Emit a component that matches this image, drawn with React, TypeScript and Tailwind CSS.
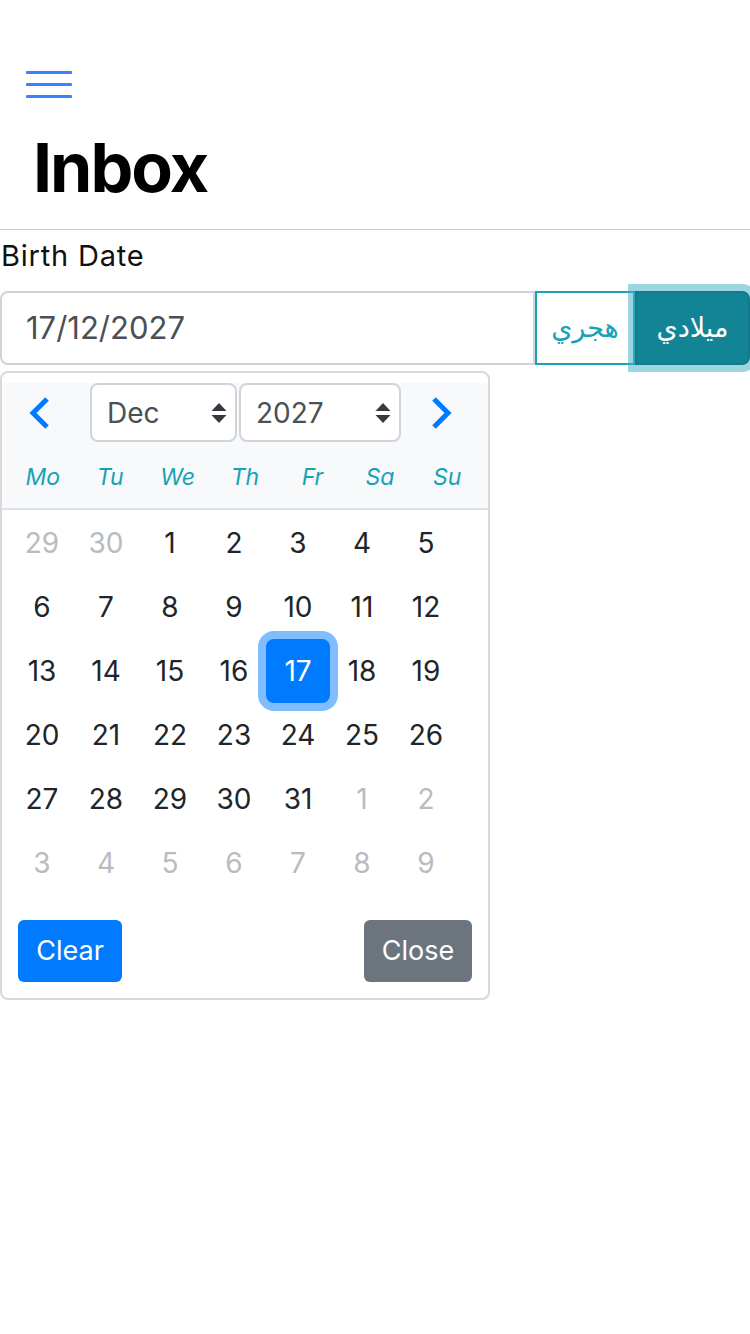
import { useState } from 'react';

const weekDays = ['Mo', 'Tu', 'We', 'Th', 'Fr', 'Sa', 'Su'];

type Day = { n: number; muted?: boolean };

const buildDays = (): Day[] => {
  const days: Day[] = [{ n: 29, muted: true }, { n: 30, muted: true }];
  for (let i = 1; i <= 31; i++) days.push({ n: i });
  for (let i = 1; i <= 9; i++) days.push({ n: i, muted: true });
  return days;
};

const Chevron = ({ dir }: { dir: 'left' | 'right' }) => (
  <svg width="24" height="34" viewBox="0 0 24 34" fill="none">
    <polyline
      points={dir === 'left' ? '19,3 5,17 19,31' : '5,3 19,17 5,31'}
      stroke="#007bff"
      strokeWidth="5"
      strokeLinejoin="miter"
    />
  </svg>
);

const SelectArrows = () => (
  <svg width="16" height="22" viewBox="0 0 16 22">
    <path d="M8 1 L15.5 9 L0.5 9 Z" fill="#343a40" />
    <path d="M0.5 13 L15.5 13 L8 21 Z" fill="#343a40" />
  </svg>
);

export default function App() {
  const [selected, setSelected] = useState(17);
  const days = buildDays();

  return (
    <div className="w-[750px] min-h-[1334px] bg-white font-['Inter',sans-serif]">
      {/* Toolbar */}
      <header className="h-[128px] pt-[40px] flex items-center px-[26px]">
        <svg width="46" height="27" viewBox="0 0 46 27">
          <line x1="1.5" y1="1.5" x2="44.5" y2="1.5" stroke="#3880ff" strokeWidth="3.2" strokeLinecap="round" />
          <line x1="1.5" y1="13.5" x2="44.5" y2="13.5" stroke="#3880ff" strokeWidth="3.2" strokeLinecap="round" />
          <line x1="1.5" y1="25.5" x2="44.5" y2="25.5" stroke="#3880ff" strokeWidth="3.2" strokeLinecap="round" />
        </svg>
      </header>

      {/* Large title */}
      <div className="h-[102px] pt-[5px] pl-[33px] border-b border-[#c8c7cc]">
        <h1 className="text-[68px] leading-none font-bold tracking-[-2px] text-black">Inbox</h1>
      </div>

      {/* Form */}
      <div className="pt-[11px]">
        <label className="block text-[29px] leading-none tracking-[0.8px] text-[#111] pl-[1px]">Birth Date</label>

        <div className="mt-[21px] flex h-[74px]">
          <div className="w-[535px] border-2 border-[#ced4da] rounded-l-[8px] flex items-center pl-[24px] text-[31px] text-[#495057]">
            17/12/2027
          </div>
          <button className="w-[100px] border-2 border-[#17a2b8] text-[#17a2b8] text-[27px] font-['DejaVu_Sans',sans-serif] flex items-center justify-center">
            هجري
          </button>
          <button className="relative z-10 w-[115px] bg-[#138496] border-2 border-[#117a8b] rounded-r-[8px] text-white text-[27px] font-['DejaVu_Sans',sans-serif] flex items-center justify-center shadow-[0_0_0_7px_rgba(58,176,195,0.5)]">
            ميلادي
          </button>
        </div>

        {/* Datepicker dropdown */}
        <div className="mt-[6px] w-[490px] border-2 border-[#d9d9d9] rounded-[8px] overflow-hidden">
          <div className="bg-[#f8f9fa] border-b-2 border-[#dee2e6]">
            <div className="flex items-center h-[59px] mt-[10px]">
              <button className="w-[88px] flex justify-center pr-[12px]">
                <Chevron dir="left" />
              </button>
              <div className="w-[147px] h-[59px] bg-white border-2 border-[#ced4da] rounded-[8px] flex items-center justify-between pl-[15px] pr-[8px] text-[28px] text-[#495057]">
                <span>Dec</span>
                <SelectArrows />
              </div>
              <div className="ml-[2px] w-[162px] h-[59px] bg-white border-2 border-[#ced4da] rounded-[8px] flex items-center justify-between pl-[15px] pr-[8px] text-[28px] text-[#495057]">
                <span>2027</span>
                <SelectArrows />
              </div>
              <button className="flex-1 flex justify-center pr-[8px]">
                <Chevron dir="right" />
              </button>
            </div>
            <div className="grid grid-cols-7 px-[7px] h-[66px] pt-[4px] items-center">
              {weekDays.map((d) => (
                <div key={d} className="text-center italic text-[23px] text-[#17a2b8]">
                  {d}
                </div>
              ))}
            </div>
          </div>

          <div className="grid grid-cols-[repeat(7,64px)] pl-[8px] pt-[1px]">
            {days.map((d, i) => {
              const isSel = !d.muted && d.n === selected;
              return (
                <button
                  key={i}
                  onClick={() => !d.muted && setSelected(d.n)}
                  className={
                    isSel
                      ? 'relative z-10 h-[64px] flex items-center justify-center text-[28px] bg-[#007bff] text-white rounded-[8px] shadow-[0_0_0_8px_#80bdff]'
                      : d.muted
                        ? 'h-[64px] flex items-center justify-center text-[28px] text-[#b8bcc1]'
                        : 'h-[64px] flex items-center justify-center text-[28px] text-[#212529]'
                  }
                >
                  {d.n}
                </button>
              );
            })}
          </div>

          <div className="flex justify-between px-[16px] pt-[25px] pb-[16px]">
            <button className="w-[104px] h-[62px] rounded-[6px] bg-[#007bff] text-white text-[27px]">Clear</button>
            <button className="w-[108px] h-[62px] rounded-[6px] bg-[#6c757d] text-white text-[27px]">Close</button>
          </div>
        </div>
      </div>
    </div>
  );
}
